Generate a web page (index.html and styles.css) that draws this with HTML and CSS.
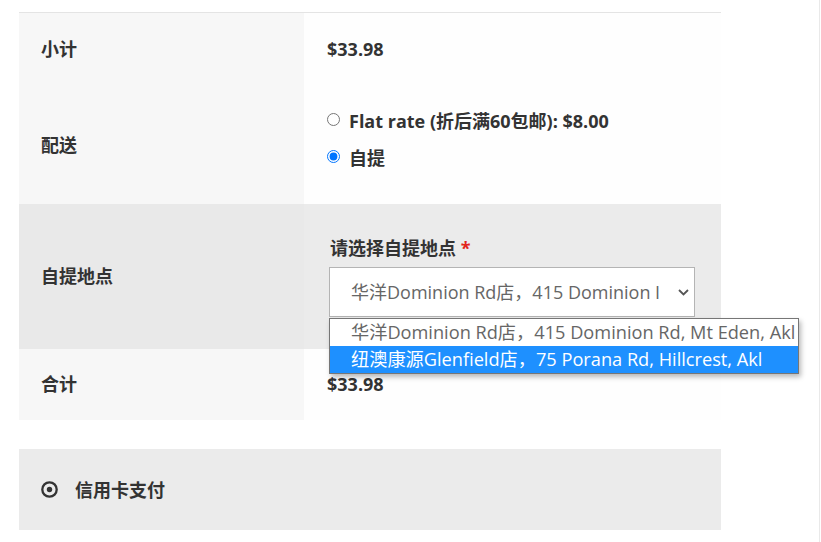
FILE: index.html
```html
<!DOCTYPE html>
<html>
<head>
<meta charset="utf-8">
<link rel="stylesheet" href="styles.css">
</head>
<body>
<div class="page">
  <table class="totals">
    <tbody>
      <tr class="row-sub">
        <th>小计</th>
        <td><span class="amount">$33.98</span></td>
      </tr>
      <tr class="row-ship">
        <th>配送</th>
        <td>
          <ul class="methods">
            <li><input type="radio" name="ship" class="radio"><label>Flat rate (折后满60包邮): <span class="amount">$8.00</span></label></li>
            <li><input type="radio" name="ship" class="radio" checked><label>自提</label></li>
          </ul>
        </td>
      </tr>
      <tr class="row-pick">
        <th>自提地点</th>
        <td>
          <div class="field">
            <div class="field-label">请选择自提地点 <span class="req">*</span></div>
            <div class="select-wrap">
              <div class="select">
                <span class="select-text">华洋Dominion Rd店，415 Dominion I</span>
                <svg class="chev" width="11" height="7" viewBox="0 0 11 7"><polyline points="1,1 5.5,5.5 10,1" fill="none" stroke="#555" stroke-width="1.8"/></svg>
              </div>
              <div class="listbox">
                <div class="opt">华洋Dominion Rd店，415 Dominion Rd, Mt Eden, Akl</div>
                <div class="opt opt-hl">纽澳康源Glenfield店，75 Porana Rd, Hillcrest, Akl</div>
              </div>
            </div>
          </div>
        </td>
      </tr>
      <tr class="row-total">
        <th>合计</th>
        <td><span class="amount">$33.98</span></td>
      </tr>
    </tbody>
  </table>
  <div class="payment">
    <svg class="pay-icon" width="17" height="17" viewBox="0 0 17 17"><circle cx="8.5" cy="8.5" r="7.2" fill="none" stroke="#333" stroke-width="2.3"/><circle cx="8.5" cy="8.5" r="2.7" fill="#333"/></svg>
    <span class="pay-text">信用卡支付</span>
  </div>
</div>
</body>
</html>
```

FILE: styles.css
```css
html, body {
  margin: 0;
  padding: 0;
  background: #ffffff;
}
body {
  font-family: "Open Sans", "Noto Sans CJK SC", sans-serif;
  font-size: 18px;
  color: #333333;
}
.page {
  width: 820px;
  min-height: 542px;
  border-right: 1px solid #e9e9e9;
  box-sizing: border-box;
  padding: 12px 0 0 19px;
}
.totals {
  width: 702px;
  border-collapse: collapse;
  border-spacing: 0;
  border-top: 1px solid #e4e4e4;
}
.totals th {
  width: 285px;
  box-sizing: border-box;
  background: #f7f7f7;
  text-align: left;
  font-weight: 700;
  padding: 0 0 0 22px;
  vertical-align: middle;
  line-height: 27px;
}
.totals td {
  background: #fefefe;
  padding: 0 0 0 23px;
  vertical-align: middle;
  line-height: 27px;
}
.amount {
  font-weight: 700;
}
.row-sub th, .row-sub td {
  height: 74px;
  vertical-align: top;
  padding-top: 23px;
  box-sizing: border-box;
}
.row-ship th { height: 117px; }
.row-ship td { vertical-align: top; padding-top: 16px; }
.methods {
  list-style: none;
  margin: 0;
  padding: 0;
}
.methods li {
  display: flex;
  align-items: center;
  height: 37px;
}
.radio {
  margin: 0 9px 3px 0;
  width: 13px;
  height: 13px;
}
.methods label {
  font-weight: 700;
}
.row-pick th, .row-pick td {
  background: #ebebeb;
  height: 145px;
}
.row-pick th {
  background: #e9e9e9;
}
.field {
  display: flex;
  flex-direction: column;
}
.field-label {
  font-weight: 700;
  padding-left: 3px;
  line-height: 27px;
  margin-bottom: 5px;
}
.req {
  color: #e2241a;
}
.select-wrap {
  position: relative;
  padding-left: 2px;
}
.select {
  width: 366px;
  height: 50px;
  box-sizing: border-box;
  border: 1px solid #b4b4b4;
  background: #ffffff;
  display: flex;
  align-items: center;
  padding: 0 5px 0 21px;
  color: #666666;
  font-size: 18px;
  overflow: hidden;
  white-space: nowrap;
}
.select-text {
  flex: 1;
  overflow: hidden;
}
.chev {
  flex: none;
  margin-left: 8px;
}
.listbox {
  position: absolute;
  left: 2px;
  top: 51px;
  width: 470px;
  box-sizing: border-box;
  border: 1px solid #767676;
  background: #ffffff;
  box-shadow: 2px 3px 5px rgba(0, 0, 0, 0.28);
  z-index: 5;
}
.opt {
  height: 27px;
  line-height: 27px;
  padding-left: 21px;
  font-size: 18.2px;
  color: #666666;
  white-space: nowrap;
}
.opt-hl {
  background: #1e90ff;
  color: #ffffff;
}
.row-total th, .row-total td {
  height: 71px;
}
.row-total td {
  padding-top: 1px;
  box-sizing: border-box;
}
.payment {
  width: 702px;
  height: 81px;
  box-sizing: border-box;
  margin-top: 29px;
  background: #ebebeb;
  display: flex;
  align-items: center;
  padding-left: 22px;
}
.pay-icon {
  margin-right: 17px;
}
.pay-text {
  font-weight: 700;
}
```
